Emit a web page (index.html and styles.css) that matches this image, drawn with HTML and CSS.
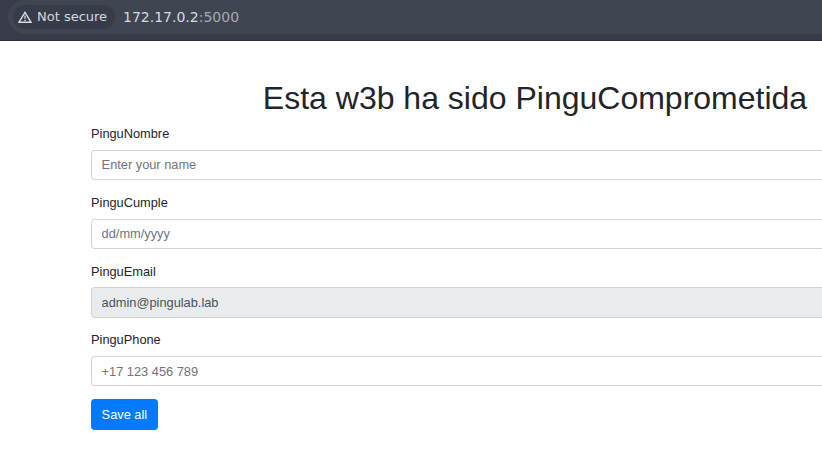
FILE: index.html
```html
<!DOCTYPE html>
<html lang="es">
<head>
<meta charset="utf-8">
<title>PinguComprometida</title>
<link rel="stylesheet" href="styles.css">
</head>
<body>
<header class="toolbar">
  <div class="address">
    <div class="chip">
      <svg class="warn" viewBox="0 0 14 12" width="14" height="12"><path d="M7 1.3 13 11.3H1Z" fill="none" stroke="currentColor" stroke-width="1.4"/><path d="M7 4.6v3.2M7 8.7v1.3" stroke="currentColor" stroke-width="1.3"/></svg>
      <span>Not secure</span>
    </div>
    <div class="url">172.17.0.2<span class="port">:5000</span></div>
  </div>
</header>
<main class="container">
  <h1>Esta w3b ha sido PinguComprometida</h1>
  <form>
    <div class="group"><label for="name">PinguNombre</label><input id="name" type="text" placeholder="Enter your name"></div>
    <div class="group"><label for="birth">PinguCumple</label><input id="birth" type="text" placeholder="dd/mm/yyyy"></div>
    <div class="group"><label for="email">PinguEmail</label><input id="email" type="text" value="admin@pingulab.lab" readonly></div>
    <div class="group"><label for="phone">PinguPhone</label><input id="phone" type="text" placeholder="+17 123 456 789"></div>
    <button type="button">Save all</button>
  </form>
</main>
</body>
</html>
```
FILE: styles.css
```css
* { box-sizing: border-box; }
html, body { height: 100%; overflow: hidden; }
body {
  margin: 0;
  background: #fff;
  color: #212529;
  font: 12.8px/1.5 "Liberation Sans", Arial, sans-serif;
}
.toolbar {
  height: 41px;
  padding-left: 8px;
  background: #383c4a;
  border-bottom: 1px solid #2b2e39;
  overflow: hidden;
  font-family: "DejaVu Sans", sans-serif;
}
.address {
  display: flex;
  align-items: center;
  height: 34px;
  padding-left: 5px;
  background: #404552;
  border-radius: 17px 0 0 17px;
}
.chip {
  display: flex;
  align-items: center;
  gap: 5px;
  width: 102px;
  height: 24px;
  padding-left: 5px;
  border-radius: 12px;
  background: #383c4a;
  color: #d3dae3;
  font-size: 13px;
  white-space: nowrap;
}
.warn { flex: none; }
.url {
  margin-left: 8px;
  color: #d3dae3;
  font-size: 14px;
}
.port { color: #a4aab4; }
.container {
  width: 888px;
  margin-left: 91px;
  padding-top: 38.4px;
}
h1 {
  margin: 0 0 6.4px;
  font-size: 32px;
  font-weight: 400;
  line-height: 1.2;
  text-align: center;
}
.group { margin-bottom: 12.9px; }
label {
  display: block;
  margin-bottom: 6.4px;
}
input {
  display: block;
  width: 100%;
  height: 30.3px;
  padding: 4.65px 9.6px;
  border: 1px solid #ced4da;
  border-radius: 3.2px;
  background: #fff;
  color: #495057;
  font: inherit;
}
input::placeholder { color: #6c757d; opacity: 1; }
input[readonly] { background: #e9ecef; }
button {
  display: block;
  height: 30.4px;
  padding: 4.8px 9.6px;
  border: 1px solid #007bff;
  border-radius: 3.2px;
  background: #007bff;
  color: #fff;
  font: inherit;
}
```
